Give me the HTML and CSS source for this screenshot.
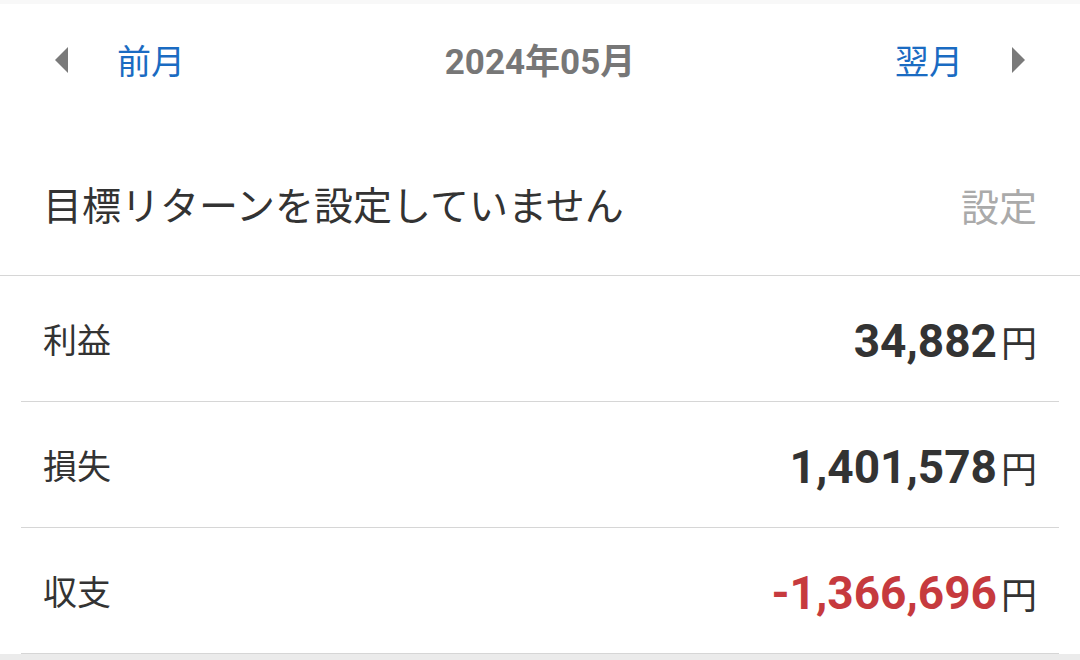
FILE: index.html
```html
<!DOCTYPE html>
<html lang="ja">
<head>
<meta charset="utf-8">
<link rel="stylesheet" href="styles.css">
</head>
<body>
<div class="page">
  <div class="strip"></div>
  <div class="nav">
    <div class="nav-side">
      <svg class="arrow" width="14" height="26" viewBox="0 0 14 26"><polygon points="13,0 13,26 0,13" fill="#7a7a7a"/></svg>
      <span class="nav-link">前月</span>
    </div>
    <div class="nav-title">2024年05月</div>
    <div class="nav-side right">
      <span class="nav-link">翌月</span>
      <svg class="arrow" width="14" height="26" viewBox="0 0 14 26"><polygon points="1,0 1,26 14,13" fill="#7a7a7a"/></svg>
    </div>
  </div>
  <div class="target">
    <span class="target-text">目標リターンを設定していません</span>
    <span class="target-btn">設定</span>
  </div>
  <div class="list">
    <div class="row">
      <span class="label">利益</span>
      <span class="value"><span class="num">34,882</span><span class="yen">円</span></span>
    </div>
    <div class="row">
      <span class="label">損失</span>
      <span class="value"><span class="num">1,401,578</span><span class="yen">円</span></span>
    </div>
    <div class="row">
      <span class="label">収支</span>
      <span class="value"><span class="num neg">-1,366,696</span><span class="yen">円</span></span>
    </div>
  </div>
</div>
</body>
</html>
```

FILE: styles.css
```css
html, body {
  margin: 0;
  padding: 0;
  background: #ebebeb;
  height: 100%;
}
body {
  font-family: Roboto, "Noto Sans CJK JP", sans-serif;
  color: #333;
}
.page {
  background: #fff;
}
.strip {
  height: 4px;
  background: #f8f8f8;
}
.nav {
  height: 116px;
  display: flex;
  align-items: center;
  justify-content: space-between;
  padding: 0 55px;
}
.nav-side {
  display: flex;
  align-items: center;
  gap: 48px;
  width: 200px;
}
.nav-side.right {
  justify-content: flex-end;
  gap: 48px;
}
.arrow {
  display: block;
  margin-top: -4px;
}
.nav-link {
  font-size: 34px;
  color: #1a6bc2;
  line-height: 1;
}
.nav-title {
  font-size: 35px;
  font-weight: 700;
  color: #777;
  line-height: 1;
}
.target {
  height: 135px;
  padding-top: 20px;
  display: flex;
  align-items: center;
  justify-content: space-between;
  padding-left: 43px;
  padding-right: 43px;
  border-bottom: 1px solid #d6d6d6;
}
.target-text {
  font-size: 39px;
  line-height: 1;
  color: #333;
}
.target-btn {
  font-size: 38px;
  line-height: 1;
  color: #aaa;
}
.list {
  margin: 0 21px;
}
.row {
  height: 120px;
  padding-top: 5px;
  display: flex;
  align-items: center;
  justify-content: space-between;
  padding-left: 22px;
  padding-right: 22px;
  border-bottom: 1px solid #d6d6d6;
}
.label {
  font-size: 34px;
  line-height: 1;
}
.value {
  display: flex;
  align-items: baseline;
  gap: 4px;
  line-height: 1;
}
.num {
  font-size: 46px;
  font-weight: 700;
  color: #333;
}
.num.neg {
  color: #c63a3e;
}
.yen {
  font-size: 36px;
  color: #333;
}
```
